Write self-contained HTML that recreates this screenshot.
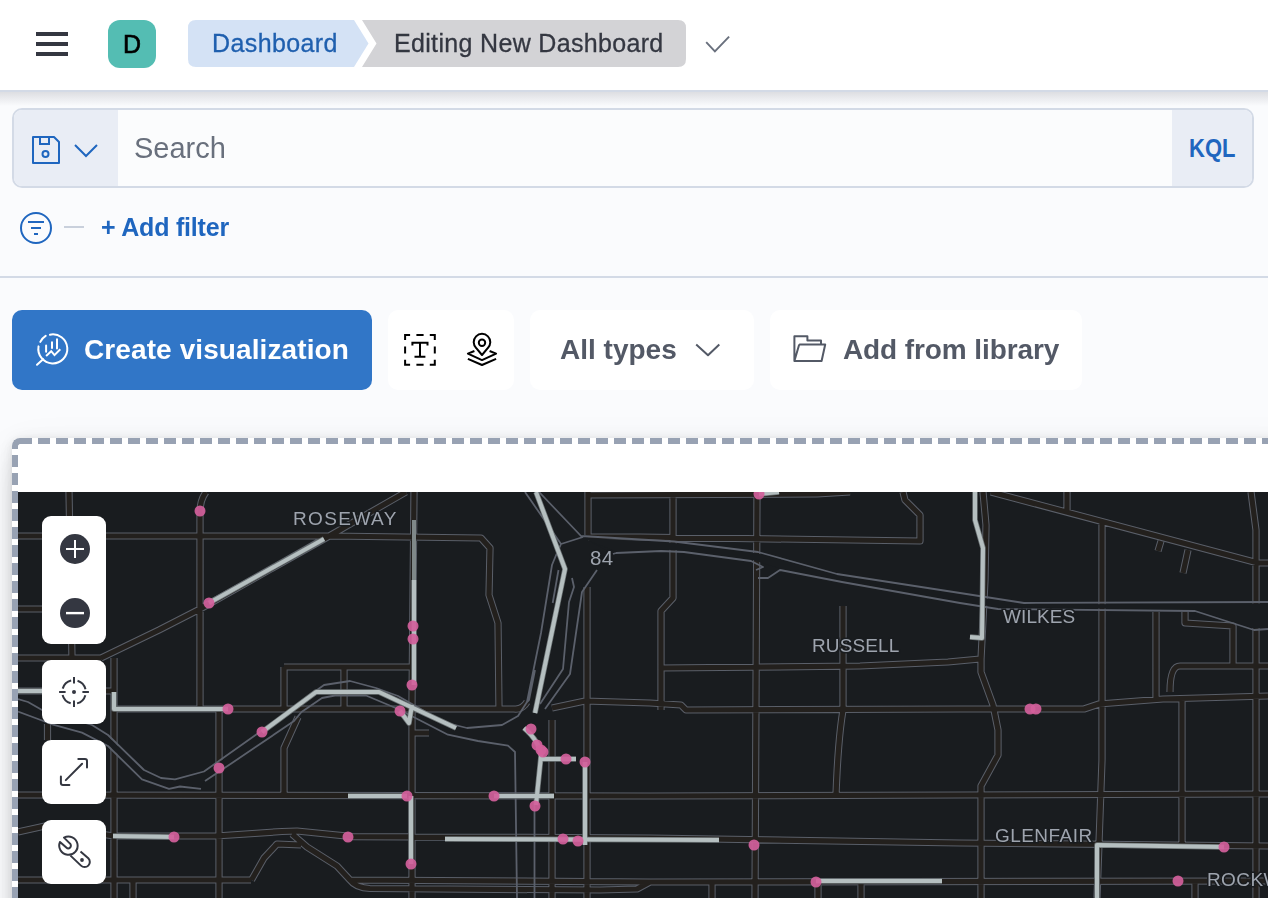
<!DOCTYPE html>
<html><head><meta charset="utf-8">
<style>
*{box-sizing:border-box;margin:0;padding:0}
html,body{width:1268px;height:898px;overflow:hidden}
body{background:#fafbfd;font-family:"Liberation Sans",sans-serif;position:relative}
.abs{position:absolute}
.bc,.t28,.blue,#avatar{will-change:transform}
#hdr{left:0;top:0;width:1268px;height:90px;background:#fff;border-bottom:0}
#hdrline{left:0;top:90px;width:1268px;height:2px;background:#d3dae6}
#hdrshadow{left:0;top:92px;width:1268px;height:14px;background:linear-gradient(#dddee2,rgba(250,251,253,0))}
.bar{left:36px;width:32px;height:3.6px;background:#343741}
#avatar{left:108px;top:20px;width:48px;height:48px;border-radius:12px;background:#54bdb3;color:#000;font-size:25px;line-height:48px;text-align:center;-webkit-text-stroke:0.6px #000}
.bc{font-size:25px;line-height:48px;white-space:nowrap}
#srch{left:12px;top:108px;width:1242px;height:80px;border:2px solid #d3dae6;border-radius:10px;background:#fbfcfd;overflow:hidden}
#srchL{left:0;top:0;width:104px;height:76px;background:#e9edf5}
#srchR{right:0;top:0;width:80px;height:76px;background:#e9edf5}
.blue{color:#1f66bf}
#hline{left:0;top:276px;width:1268px;height:2px;background:#d3dae6}
#cv{left:12px;top:310px;width:360px;height:80px;border-radius:10px;background:#3176c7}
.wbox{top:310px;height:80px;border-radius:10px;background:#fff}
.t28{font-size:28px;white-space:nowrap}
</style></head>
<body>
<div id="hdr" class="abs">
  <div class="abs bar" style="top:32.2px"></div>
  <div class="abs bar" style="top:42.1px"></div>
  <div class="abs bar" style="top:52.2px"></div>
  <div id="avatar" class="abs">D</div>
  <svg class="abs" style="left:0;top:0" width="760" height="90">
    <path d="M196 20 H354 L368.5 43.5 L354 67 H196 Q188 67 188 59 V28 Q188 20 196 20 Z" fill="#d4e2f5"/>
    <path d="M362 20 H678 Q686 20 686 28 V59 Q686 67 678 67 H362 L376.5 43.5 Z" fill="#d3d3d6"/>
    <path d="M706.2 42.2 L714.9 51.3 L729.1 36.7" stroke="#69707d" stroke-width="1.9" fill="none"/>
  </svg>
  <div class="abs bc" style="left:212px;top:19px;color:#1f5fae;letter-spacing:0.4px;-webkit-text-stroke:0.3px #1f5fae">Dashboard</div>
  <div class="abs bc" style="left:394px;top:19px;color:#343741;letter-spacing:0.33px;-webkit-text-stroke:0.3px #343741">Editing New Dashboard</div>
</div>
<div id="hdrline" class="abs"></div>
<div id="hdrshadow" class="abs"></div>

<div id="srch" class="abs">
  <div id="srchL" class="abs"></div>
  <div id="srchR" class="abs"></div>
</div>
<svg class="abs" style="left:0;top:100px" width="120" height="80">
  <path d="M33 37 H54 L59 42 V63 H33 Z" stroke="#1f66bf" stroke-width="2" fill="none" stroke-linejoin="round"/>
  <path d="M40 37 V44 H49 V37" stroke="#1f66bf" stroke-width="2" fill="none"/>
  <circle cx="45.5" cy="54" r="3" stroke="#1f66bf" stroke-width="2" fill="none"/>
  <path d="M75 45 L86 56 L97 45" stroke="#1f66bf" stroke-width="2" fill="none"/>
</svg>
<div class="abs t28" style="left:134px;top:132px;color:#69707d;line-height:32px;font-size:29px">Search</div>
<div class="abs" style="left:1189px;top:132px;font-size:25px;font-weight:bold;line-height:32px;transform:scaleX(0.88);transform-origin:0 0" ><span class="blue">KQL</span></div>

<svg class="abs" style="left:0;top:200px" width="100" height="60">
  <circle cx="36" cy="28" r="15" stroke="#1f66bf" stroke-width="2" fill="none"/>
  <path d="M28 22 H44 M31 28 H41 M34 34 H38" stroke="#1f66bf" stroke-width="2"/>
  <path d="M64 27 H84" stroke="#c9d0dc" stroke-width="2"/>
</svg>
<div class="abs blue" style="left:101px;top:212px;font-size:25px;font-weight:bold;line-height:30px;white-space:nowrap;letter-spacing:-0.2px">+ Add filter</div>
<div id="hline" class="abs"></div>

<div id="cv" class="abs"></div>
<div class="abs t28" style="left:84px;top:334px;color:#fff;font-weight:bold;line-height:32px;letter-spacing:0.1px">Create visualization</div>
<div class="abs wbox" style="left:388px;width:126px"></div>
<div class="abs wbox" style="left:530px;width:224px"></div>
<div class="abs t28" style="left:560px;top:334px;color:#535966;font-weight:bold;line-height:32px">All types</div>
<div class="abs wbox" style="left:770px;width:312px"></div>
<div class="abs t28" style="left:843px;top:334px;color:#535966;font-weight:bold;line-height:32px;letter-spacing:-0.1px">Add from library</div>


<svg class="abs" style="left:0;top:320px" width="1100" height="60" viewBox="0 320 1100 60">
<g stroke="#fff" stroke-width="2" fill="none" stroke-linecap="round">
<path d="M49.9 334.7 A14.5 14.5 0 1 1 38.54 346.38"/>
<path d="M40.3 341.9 A14.5 14.5 0 0 1 45.7 335.8"/>
<path d="M43.1 359.2 L37 364.8"/>
<path d="M46.1 345.6 V351.7 M52 342.3 V348.1 M57 339.2 V348.4"/>
<path d="M46.1 355.9 L51.2 351.2 L54.5 355.1 L60.3 349.2" stroke-linecap="butt"/>
</g>
<g stroke="#000" stroke-width="2" fill="none">
<path d="M405.1 340.1 V335.1 H410.1 M416.4 335.1 H423.6 M429.8 335.1 H434.8 V340.1 M434.8 346.4 V353.6 M434.8 359.8 V364.8 H429.8 M423.6 364.8 H416.4 M410.1 364.8 H405.1 V359.8 M405.1 353.6 V346.4"/>
<path d="M412.4 345.6 V342.8 H427.5 V345.6 M420 342.8 V356.7 M414.5 356.7 H425.4"/>
<path d="M482 355 L476.3 348.2 A8.3 8.3 0 1 1 487.7 348.2 Z" stroke-linejoin="round"/>
<circle cx="482" cy="342.8" r="3.2"/>
<path d="M474.4 351 L467.9 353.6 L482 360.1 L496.1 353.6 L489.6 351" stroke-linejoin="round"/>
<path d="M467.9 358.8 L482 365 L496.1 358.8" stroke-linejoin="round"/>
</g>
<g stroke="#535966" stroke-width="2" fill="none" stroke-linejoin="round">
<path d="M696.2 344.5 L708 355.2 L719.3 344.5"/>
<path d="M794.4 361 V336.2 H807.4 V340.4 H821 V344.5 M799.2 344.5 H825.2 L821.6 361 H794.4 L799.2 344.5"/>
</g>
</svg>

<div class="abs" style="left:12px;top:438px;width:1300px;height:520px;background:#fff;border-radius:7px;box-shadow:0 2px 8px -2px rgba(0,0,0,.08),0 5px 16px -2px rgba(0,0,0,.06),0 11px 24px -2px rgba(0,0,0,.05),0 28px 30px -2px rgba(0,0,0,.04),0 16px 48px rgba(0,0,0,.07),0 0 16px rgba(0,0,0,.05)"></div>
<div class="abs" style="left:32px;top:438px;width:1236px;height:6px;background:linear-gradient(90deg,#98a2b3 0,#98a2b3 12px,#fff 12px,#fff 18px);background-size:18px 6px;background-position:6px 0"></div>
<div class="abs" style="left:12px;top:449.2px;width:6px;height:449px;background:linear-gradient(180deg,#98a2b3 0,#98a2b3 12px,#fff 12px,#fff 18px);background-size:6px 18px;background-position:0 6px"></div>
<div class="abs" style="left:12px;top:438px;width:20px;height:11.2px;border-top:6px solid #98a2b3;border-left:6px solid #98a2b3;border-top-left-radius:8px;background:#fff"></div>
<div id="map" class="abs" style="left:18px;top:492px;width:1250px;height:406px;background:#191c1f;overflow:hidden">
<svg width="1250" height="406" viewBox="18 492 1250 406" style="position:absolute;left:0;top:0;will-change:transform">
<path d="M69 492 L72 659 M47.5 724 V740 M18 691 H114 M18 536 L330 536 L481 538 L490 548 L489 595 L498 623 L499 709 M206 492 Q200 500 200 512 V709 M101 658 L159 630 L200 609 L324 539 L406 492 M18 609 H45 M18 658 H101 M114 658 V898 M114 709 H514 Q522 710 527 702 M219 709 V898 M18 795 L650 796 L960 795 L1268 794 M18 832 L45 826 L114 836 L216 836 L282 831.5 L297 831 L352.5 836.6 L650 838 L960 843 L1268 846 M18 880 L251 880 M350 880 L650 882 L1268 881 M133 880 V898 M292 834 L307 847 L337 866 L350 880 Q356 888 370 888.5 L600 890 L637 889 L650 882 M284 667 H412 M284 667 V709 M344 667 V709 M414 492 L412 700 V898 M298 717 L284 748 V795 M301 845 L277 844 L264 858 L251.5 880 M411 733 H429 M588 492 V535 M587 587 V898 M588 495 L817 494 L850 492 M552 708 L585 701 L650 703 L681 705 L686 710 L960 709 L1084 709 L1099 704 L1163 699 L1268 696 M552 720 V898 M673 492 V598 L661 611 V710 M757 492 L755 898 M588 537 L640 537 L920 541 V515 L905 500 L903 492 M843 606 V710 Q838 740 836 795 M661 668 L860 666 L948 662 L980 659 M712 882 V898 M818 882 V898 M861 882 V898 M983 492 L986 525 L985 580 L981 659 L981 672 L993 705 L998 730 L998 755 L981 786 V898 M991 492 L1258 563 H1268 M1067 492 V510 M1161 541 L1158 551 M1188 550 L1183 573 M1102 523 V760 L1097 898 M1251 492 L1256 530 V898 M1185 612 V623 L1233 626 V666 M1156 612 V699 M1170 692 Q1170 666 1180 666 H1268 M1182 699 V846 M1195 881 V898" fill="none" stroke="#5a5f69" stroke-width="7.2" stroke-linejoin="round"/>
<path d="M69 492 L72 659 M47.5 724 V740 M18 691 H114 M18 536 L330 536 L481 538 L490 548 L489 595 L498 623 L499 709 M206 492 Q200 500 200 512 V709 M101 658 L159 630 L200 609 L324 539 L406 492 M18 609 H45 M18 658 H101 M114 658 V898 M114 709 H514 Q522 710 527 702 M219 709 V898 M18 795 L650 796 L960 795 L1268 794 M18 832 L45 826 L114 836 L216 836 L282 831.5 L297 831 L352.5 836.6 L650 838 L960 843 L1268 846 M18 880 L251 880 M350 880 L650 882 L1268 881 M133 880 V898 M292 834 L307 847 L337 866 L350 880 Q356 888 370 888.5 L600 890 L637 889 L650 882 M284 667 H412 M284 667 V709 M344 667 V709 M414 492 L412 700 V898 M298 717 L284 748 V795 M301 845 L277 844 L264 858 L251.5 880 M411 733 H429 M588 492 V535 M587 587 V898 M588 495 L817 494 L850 492 M552 708 L585 701 L650 703 L681 705 L686 710 L960 709 L1084 709 L1099 704 L1163 699 L1268 696 M552 720 V898 M673 492 V598 L661 611 V710 M757 492 L755 898 M588 537 L640 537 L920 541 V515 L905 500 L903 492 M843 606 V710 Q838 740 836 795 M661 668 L860 666 L948 662 L980 659 M712 882 V898 M818 882 V898 M861 882 V898 M983 492 L986 525 L985 580 L981 659 L981 672 L993 705 L998 730 L998 755 L981 786 V898 M991 492 L1258 563 H1268 M1067 492 V510 M1161 541 L1158 551 M1188 550 L1183 573 M1102 523 V760 L1097 898 M1251 492 L1256 530 V898 M1185 612 V623 L1233 626 V666 M1156 612 V699 M1170 692 Q1170 666 1180 666 H1268 M1182 699 V846 M1195 881 V898" fill="none" stroke="#23201d" stroke-width="5.2" stroke-linejoin="round"/>
<path d="M581 537.5 L674 543 L758 553.5 L837 575.5 L960 594.5 L1024 604.5 L1268 603.5 L1268 627.5 L1254 628.5 L1195 609.5 L998 607.5 L960 601.5 L842 580.5 L780 568.5 L751 559.5 L684 550.5 L661 549.5 L616 551.5 Z M526.5 492 L538 492 L581 537 L612 553 L593 569 L580 592 L568 674 L544 707 L529 700 L542.5 633 L553.5 565 L559 544 Z M18 700.5 L28 703.5 L42 711.5 L92 726.5 L108 736.5 L144 771.5 L161 779.5 L175 781 L204 773 L257 735.5 L292 722 L232 761.5 L205 779.5 L201 787 L180 784.5 L169 787 L142 777.5 L108 744.5 L82 731 L53 723 L38 717.5 L18 710 Z" fill="#191c1f"/>
<path d="M539 492 L581 536 L674 541.5 L758 552 L837 574 L960 593 L1024 603 L1268 602 M616 553 L661 551 L684 552 L751 561 L763 567 L756 570 M758 578 L768 578 L780 570 L842 582 L960 603 L998 609 L1195 611 L1254 630 L1268 629 M525 492 L561 544 Q556 555 552 565 L541 633 L527 702 L518 716 L502 725 L467 728 L451 724 L440 720 L398 696 L376 688 L350 681 L324 685 L317 690 L257 734 L204 771.5 L175 779.4 L161 778 L144 770 L108 735 L92 725 L42 710 L28 702 L18 699 M18 711.6 L38 719 L53 724.6 L82 732.6 L108 746 L142 779.4 L169 788.8 L180 786.5 L201 788.8 M205 781 L232 763 L294 721 L301.5 712 L322 698 L335 695.5 L366 695.5 L398 709 L431 726 L448 734.7 L478 741 L508 745.7 L515 752 L517 898 M558.5 570 L552.7 603 M572 578 L574 587 L569 602 L563 669 L540 704 M597 570 L582 592 L570 674 L545 709 M534.5 805 V898 M561 544 L583 537 M613 554 L616 553 M527 702 L529 700 L535 670" fill="none" stroke="#5b606b" stroke-width="1.8" stroke-linejoin="round"/>
<path d="M209 603 L324 539 M18 691 H42 M114 692 V709 H228 M262 732 L316 692 L379 692 L456 728 M400 711 L409 723 L412 705 M414 580 V685 M536 492 L565 569 L535 713 M524 728 Q540 742 541 756 L536 805 M540 759 H576 M585 762 V845 M348 796 H407 M494 796 H554 M411 796 V864 M445 839 L719 840 M113 836 L174 837 M759 494 L779 492 M975 492 V520 L983 548 L982 638 L970 637 M816 881 H942 M1097 898 V845 L1224 847" fill="none" stroke="#6c7375" stroke-width="5.5" stroke-linejoin="round"/>
<path d="M414 520 V580" fill="none" stroke="#7f8889" stroke-width="4"/>
<path d="M209 603 L324 539 M18 691 H42 M114 692 V709 H228 M262 732 L316 692 L379 692 L456 728 M400 711 L409 723 L412 705 M414 580 V685 M536 492 L565 569 L535 713 M524 728 Q540 742 541 756 L536 805 M540 759 H576 M585 762 V845 M348 796 H407 M494 796 H554 M411 796 V864 M445 839 L719 840 M113 836 L174 837 M759 494 L779 492 M975 492 V520 L983 548 L982 638 L970 637 M816 881 H942 M1097 898 V845 L1224 847" fill="none" stroke="#b5bfc0" stroke-width="4" stroke-linejoin="round"/>
<circle cx="200" cy="511" r="5.5" fill="#d2609b" fill-opacity="0.92"/>
<circle cx="209" cy="603" r="5.5" fill="#d2609b" fill-opacity="0.92"/>
<circle cx="228" cy="709" r="5.5" fill="#d2609b" fill-opacity="0.92"/>
<circle cx="262" cy="732" r="5.5" fill="#d2609b" fill-opacity="0.92"/>
<circle cx="219" cy="768" r="5.5" fill="#d2609b" fill-opacity="0.92"/>
<circle cx="174" cy="837" r="5.5" fill="#d2609b" fill-opacity="0.92"/>
<circle cx="348" cy="837" r="5.5" fill="#d2609b" fill-opacity="0.92"/>
<circle cx="400" cy="711" r="5.5" fill="#d2609b" fill-opacity="0.92"/>
<circle cx="412" cy="685" r="5.5" fill="#d2609b" fill-opacity="0.92"/>
<circle cx="413" cy="626" r="5.5" fill="#d2609b" fill-opacity="0.92"/>
<circle cx="413" cy="639" r="5.5" fill="#d2609b" fill-opacity="0.92"/>
<circle cx="407" cy="796" r="5.5" fill="#d2609b" fill-opacity="0.92"/>
<circle cx="494" cy="796" r="5.5" fill="#d2609b" fill-opacity="0.92"/>
<circle cx="411" cy="864" r="5.5" fill="#d2609b" fill-opacity="0.92"/>
<circle cx="531" cy="729" r="5.5" fill="#d2609b" fill-opacity="0.92"/>
<circle cx="537" cy="745" r="5.5" fill="#d2609b" fill-opacity="0.92"/>
<circle cx="541" cy="750" r="5.5" fill="#d2609b" fill-opacity="0.92"/>
<circle cx="543" cy="752" r="5.5" fill="#d2609b" fill-opacity="0.92"/>
<circle cx="566" cy="759" r="5.5" fill="#d2609b" fill-opacity="0.92"/>
<circle cx="585" cy="762" r="5.5" fill="#d2609b" fill-opacity="0.92"/>
<circle cx="535" cy="806" r="5.5" fill="#d2609b" fill-opacity="0.92"/>
<circle cx="563" cy="839" r="5.5" fill="#d2609b" fill-opacity="0.92"/>
<circle cx="578" cy="841" r="5.5" fill="#d2609b" fill-opacity="0.92"/>
<circle cx="754" cy="845" r="5.5" fill="#d2609b" fill-opacity="0.92"/>
<circle cx="759" cy="494" r="5.5" fill="#d2609b" fill-opacity="0.92"/>
<circle cx="816" cy="882" r="5.5" fill="#d2609b" fill-opacity="0.92"/>
<circle cx="1030" cy="709" r="5.5" fill="#d2609b" fill-opacity="0.92"/>
<circle cx="1036" cy="709" r="5.5" fill="#d2609b" fill-opacity="0.92"/>
<circle cx="1224" cy="847" r="5.5" fill="#d2609b" fill-opacity="0.92"/>
<circle cx="1178" cy="881" r="5.5" fill="#d2609b" fill-opacity="0.92"/>
<text x="293" y="525" font-family="Liberation Sans" font-size="19" fill="#9ea4ae" stroke="#191c1f" stroke-width="3" paint-order="stroke" letter-spacing="1.4">ROSEWAY</text>
<text x="590" y="565" font-family="Liberation Sans" font-size="20.5" fill="#9ea4ae" stroke="#191c1f" stroke-width="3" paint-order="stroke" letter-spacing="0.3">84</text>
<text x="812" y="652" font-family="Liberation Sans" font-size="19" fill="#9ea4ae" stroke="#191c1f" stroke-width="3" paint-order="stroke" letter-spacing="0.1">RUSSELL</text>
<text x="1003" y="623" font-family="Liberation Sans" font-size="19" fill="#9ea4ae" stroke="#191c1f" stroke-width="3" paint-order="stroke" letter-spacing="0.1">WILKES</text>
<text x="995" y="842" font-family="Liberation Sans" font-size="19" fill="#9ea4ae" stroke="#191c1f" stroke-width="3" paint-order="stroke" letter-spacing="0.45">GLENFAIR</text>
<text x="1207" y="886" font-family="Liberation Sans" font-size="19" fill="#9ea4ae" stroke="#191c1f" stroke-width="3" paint-order="stroke" letter-spacing="0.4">ROCKWOOD</text>
</svg>
<div class="abs" style="left:24px;top:24px;width:64px;height:128px;background:#fff;border-radius:9px"></div>
<div class="abs" style="left:24px;top:168px;width:64px;height:64px;background:#fff;border-radius:9px"></div>
<div class="abs" style="left:24px;top:248px;width:64px;height:64px;background:#fff;border-radius:9px"></div>
<div class="abs" style="left:24px;top:328px;width:64px;height:64px;background:#fff;border-radius:9px"></div>
<svg class="abs" style="left:0;top:0" width="120" height="406" viewBox="18 492 120 406">
<circle cx="75" cy="549" r="15" fill="#343741"/>
<path d="M66 549 H84 M75 540 V558" stroke="#fff" stroke-width="2"/>
<circle cx="75" cy="613.1" r="15" fill="#343741"/>
<path d="M66 613.1 H84" stroke="#fff" stroke-width="2.4"/>
<g stroke="#343741" stroke-width="2" fill="none">
<path d="M74 677.1 V683.6 M74 700.4 V706.9 M59.1 692 H65.6 M82.4 692 H88.9"/>
<circle cx="74" cy="692" r="11.8" stroke-dasharray="12.03 6.5" stroke-dashoffset="15.28"/>
<path d="M82.1 763.8 L65.8 780.1 M78.3 758.9 H85 Q87 758.9 87 761 V767.4 M60.9 776.5 V783 Q60.9 785 63 785 H69.4" stroke-linecap="round"/>
<path d="M64 837.6 L70 843.6 A2.7 2.7 0 0 1 66.3 847.6 L60 842 A9.2 9.2 0 1 0 64 837.6 Z" stroke-linejoin="round"/><path d="M70.5 855.6 L81 865.6 A3.8 3.8 0 0 0 88.3 858.3 L80.5 851.4"/>
</g>
<circle cx="74" cy="692" r="2" fill="#343741"/>
<circle cx="82" cy="860" r="1.9" fill="#343741"/>
</svg>

</div>
</body></html>
